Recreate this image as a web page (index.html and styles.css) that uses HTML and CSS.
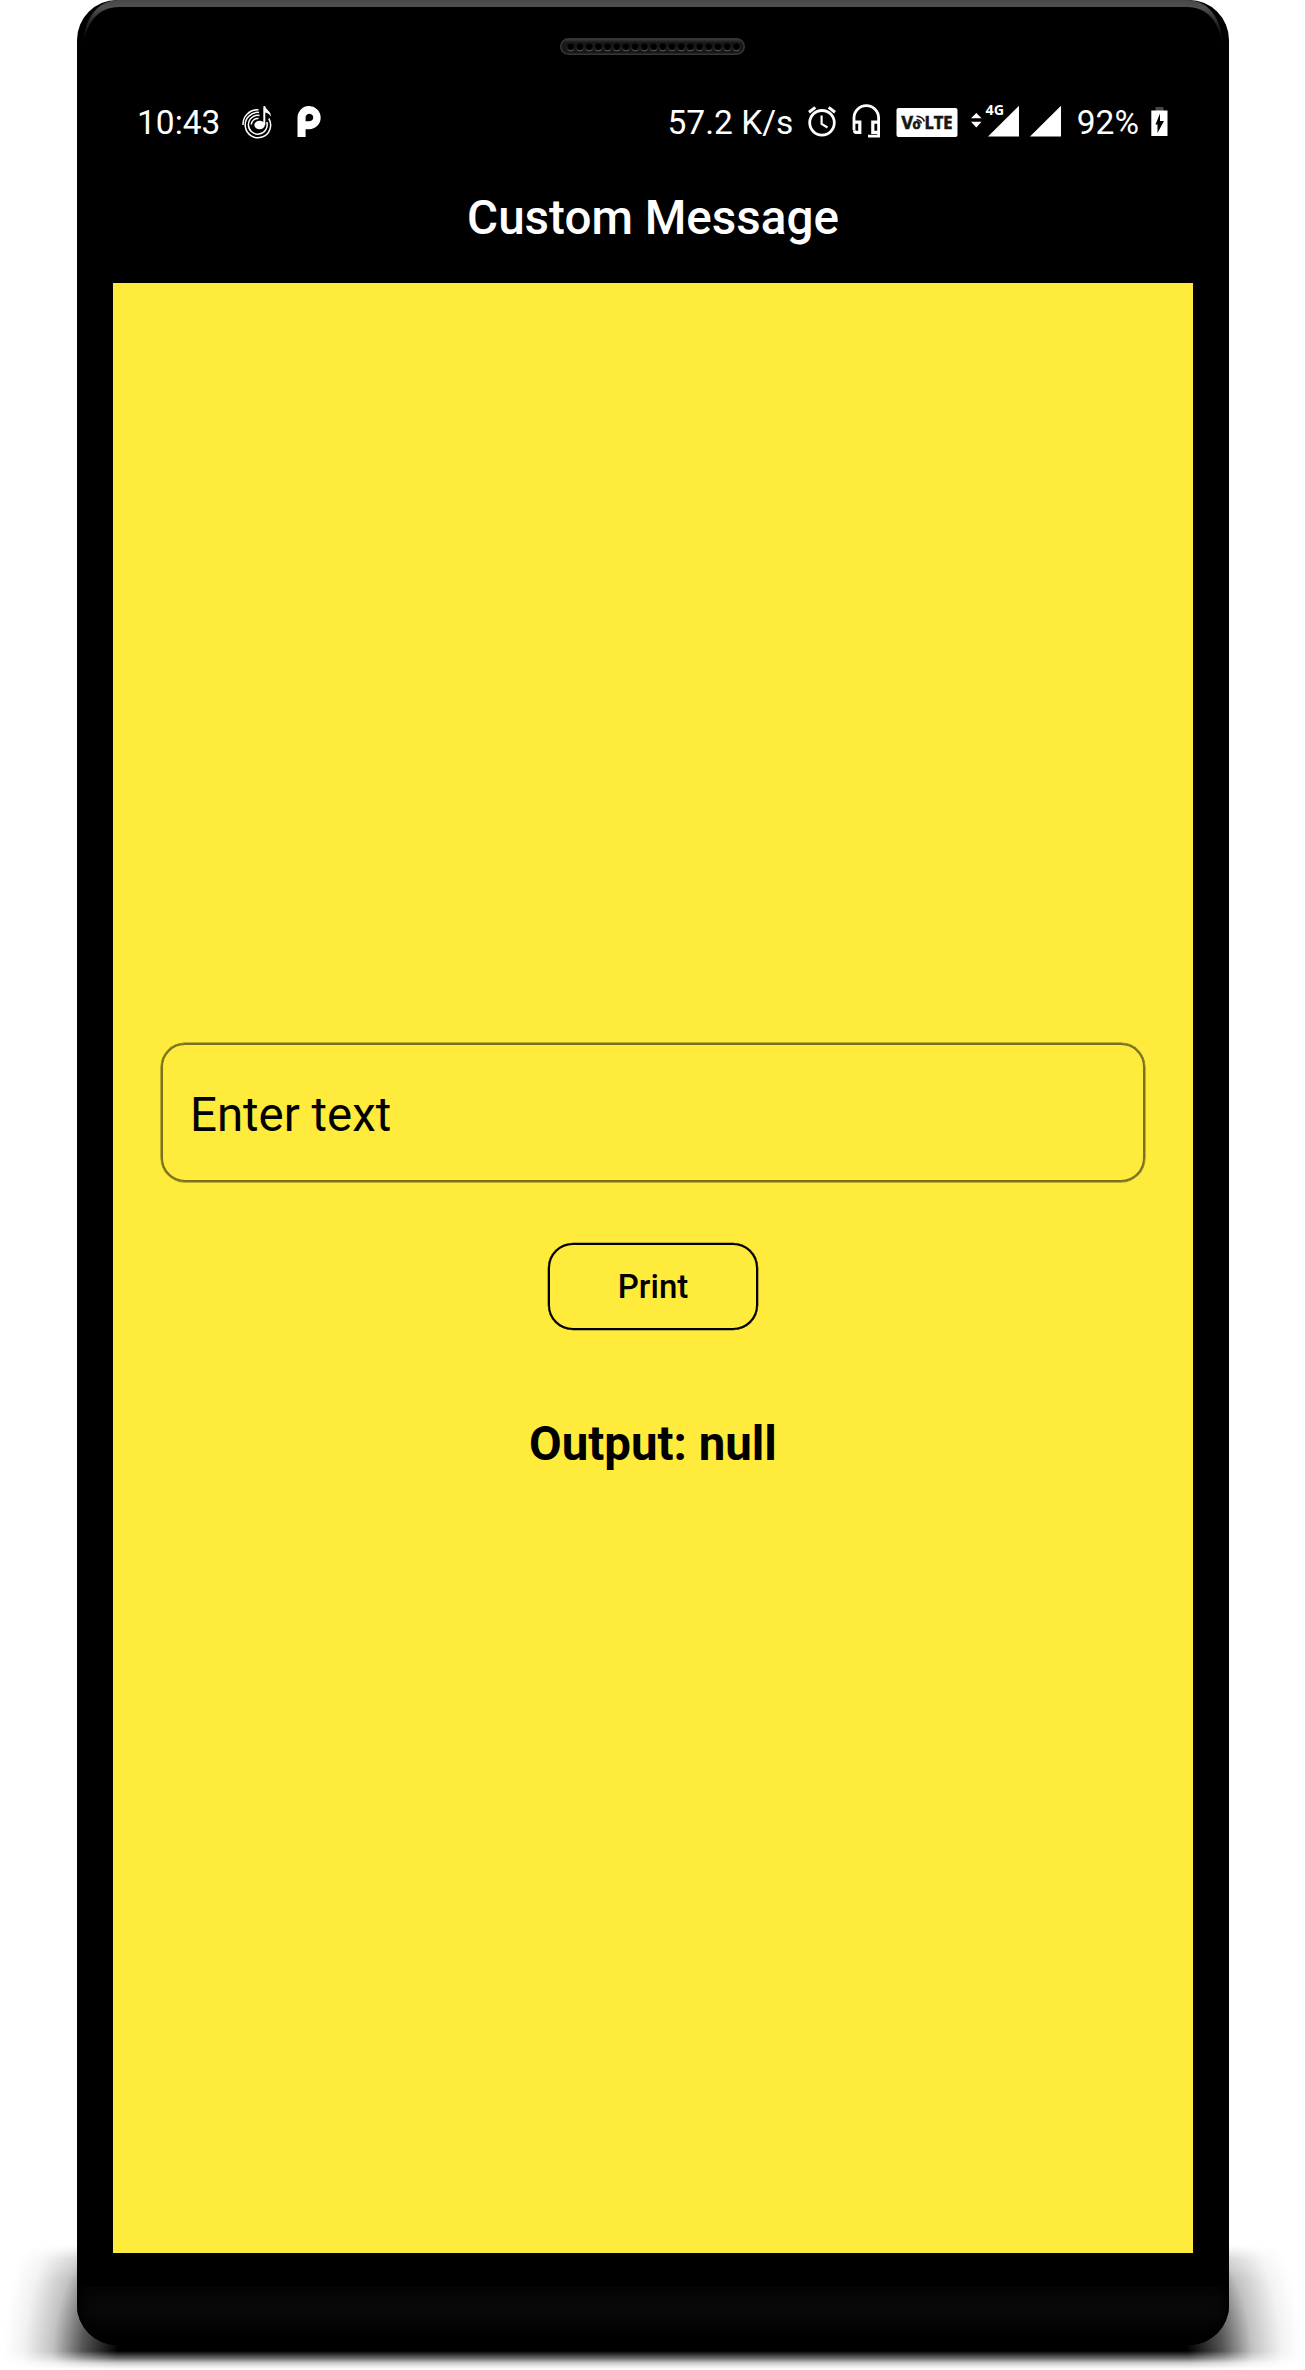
FILE: index.html
```html
<!DOCTYPE html>
<html lang="en">
<head>
<meta charset="utf-8">
<title>Custom Message</title>
<link rel="stylesheet" href="styles.css">
</head>
<body>
<div class="stage">
  <div class="ground-shadow"></div>
  <div class="phone">
    <svg class="rim" width="1152" height="60" viewBox="0 0 1152 60">
      <defs>
        <linearGradient id="rimTone" x1="0" y1="0" x2="0" y2="1">
          <stop offset="0" stop-color="#484848"/><stop offset=".18" stop-color="#505050"/>
          <stop offset=".45" stop-color="#303030"/><stop offset="1" stop-color="#000"/>
        </linearGradient>
      </defs>
      <path d="M7 42C7 20 20 0 42 0H1110C1132 0 1145 20 1145 42C1142 22 1130 7 1110 7H42C22 7 10 22 7 42Z" fill="url(#rimTone)"/>
    </svg>
    <div class="speaker">
      <svg width="185" height="17" viewBox="0 0 185 17">
        <defs>
          <linearGradient id="slot" x1="0" y1="0" x2="0" y2="1">
            <stop offset="0" stop-color="#3d3d3d"/><stop offset=".25" stop-color="#181818"/><stop offset="1" stop-color="#161616"/>
          </linearGradient>
          <linearGradient id="hole" x1="0" y1="0" x2="0" y2="1">
            <stop offset="0" stop-color="#111"/><stop offset=".5" stop-color="#222"/><stop offset="1" stop-color="#555"/>
          </linearGradient>
          <pattern id="holes" x="6" y="4" width="9.2" height="10" patternUnits="userSpaceOnUse">
            <circle cx="4.8" cy="5.3" r="4" fill="url(#hole)"/><circle cx="4.8" cy="4.8" r="3.3" fill="#000"/>
          </pattern>
        </defs>
        <rect x=".8" y=".8" width="183.4" height="15.4" rx="7.7" fill="url(#slot)" stroke="#363636" stroke-width="1.6"/>
        <rect x="6" y="4" width="175" height="10" fill="url(#holes)"/>
      </svg>
    </div>
    <header class="status">
      <div class="status-left">
        <span class="clock">10:43</span>
        <svg class="music" width="30" height="34" viewBox="0 0 30 34" fill="none" stroke="#fff" stroke-width="1.5">
          <path d="M1 22A14.5 14.5 0 0 1 16.5 6.8M26.8 15.5A12.7 12.7 0 1 1 17 9.4M24.8 19A9.4 9.4 0 1 1 17.5 12.5"/>
          <path d="M9.3 21.5A6.3 6.3 0 0 1 16.5 15.6"/>
          <path d="M22.3 22V4.5" stroke-width="2"/>
          <path d="M21.4 3H23C24 7.5 29.5 8 28.7 13.5C27 10.5 25 9.8 22.5 9.6Z" fill="#fff" stroke="none"/>
          <ellipse cx="17.6" cy="22" rx="5.3" ry="4.2" fill="#fff" stroke="none"/>
        </svg>
        <svg class="parking" width="24" height="34" viewBox="0 0 24 34">
          <path fill="#fff" fill-rule="evenodd" d="M.5 34V15.5A11.6 11.6 0 1 1 12 26.3H8.6V34ZM8.6 18.2H11.7A3.8 3.8 0 1 0 8.6 14.5Z"/>
        </svg>
      </div>
      <div class="status-right">
        <span class="rate">57.2 K/s</span>
        <svg class="alarm" width="30" height="34" viewBox="0 0 30 34" fill="none" stroke="#fff">
          <circle cx="15" cy="19.8" r="12.3" stroke-width="2.8"/>
          <path d="M2 9.2L8.3 4.4M21.7 4.4L28 9.2" stroke-width="3"/>
          <path d="M14.6 12.5V20.9L20.5 24.5" stroke-width="2.2"/>
        </svg>
        <svg class="headset" width="29" height="36" viewBox="0 0 29 36" fill="none" stroke="#fff" stroke-width="2.8">
          <path d="M2 27V15A12.3 12.3 0 0 1 26.6 15V33.2H16"/>
          <path d="M2.5 19.2H7.8V29.3H4Q2.5 29.3 2.5 27.3M26.6 19.2H20.8V29.3H26.6" stroke-width="3.2"/>
        </svg>
        <svg class="volte" width="62" height="34" viewBox="0 0 62 34">
          <rect x=".5" y="5" width="61" height="29" rx="2" fill="#fff"/>
          <g font-family="Open Sans, sans-serif" font-weight="700" fill="#161616" stroke="#161616" stroke-width=".7">
            <text x="5.5" y="26" font-size="17" textLength="11.5" lengthAdjust="spacingAndGlyphs">V</text>
            <text x="16.5" y="26" font-size="14" textLength="8" lengthAdjust="spacingAndGlyphs">o</text>
            <text x="28.5" y="26" font-size="17" textLength="28" lengthAdjust="spacingAndGlyphs">LTE</text>
          </g>
          <path d="M20.5 16.8Q24.5 17 25.5 20.5M20.5 13.2Q27 13.5 28.3 18.5" fill="none" stroke="#161616" stroke-width="1.6"/>
        </svg>
        <svg class="signal" width="50" height="34" viewBox="0 0 50 34" fill="#fff">
          <path d="M1 15.2L6.3 10L11.6 15.2ZM1 18.8H11.6L6.3 24.5Z"/>
          <text x="15.6" y="12" font-family="Open Sans, sans-serif" font-weight="700" font-size="13.5" textLength="18.5" lengthAdjust="spacingAndGlyphs">4G</text>
          <path d="M18 33.5L49 2.7V33.5Z"/>
        </svg>
        <svg class="signal-two" width="31" height="34" viewBox="0 0 31 34"><path d="M0 33.5L31 2.7V33.5Z" fill="#fff"/></svg>
        <span class="charge">92%</span>
        <svg class="battery" width="17" height="34" viewBox="0 0 17 34">
          <path d="M4.5 4H12.5V8H4.5Z" fill="#484848"/>
          <path d="M.3 7.5H16.5V33H.3Z" fill="#fff"/>
          <path d="M9 10.5V18H13L6.5 30V21.5H4.5Z" fill="#000"/>
        </svg>
      </div>
    </header>
    <h1 class="title">Custom Message</h1>
    <main class="screen">
      <div class="field">Enter text</div>
      <button class="print">Print</button>
      <p class="output">Output: null</p>
    </main>
    <div class="chin"></div>
  </div>
</div>
</body>
</html>
```
FILE: styles.css
```css
* { box-sizing: border-box; }
body { margin: 0; background: #fff; font-family: Roboto, sans-serif; }
svg { display: block; flex: none; overflow: visible; }

.stage {
  position: relative;
  width: 1305px;
  height: 2370px;
  overflow: hidden;
  padding-left: 77px;
}
.ground-shadow {
  position: absolute;
  left: 0;
  top: 2245px;
  width: 1305px;
  height: 125px;
  background:
    radial-gradient(ellipse 145px 230px at 148px 120px, #000 0, #000 22%, rgba(0,0,0,.66) 46%, rgba(0,0,0,.24) 66%, rgba(0,0,0,.05) 86%, transparent 100%) 0 0 / 148px 125px no-repeat,
    radial-gradient(ellipse 145px 230px at 0 120px, #000 0, #000 22%, rgba(0,0,0,.66) 46%, rgba(0,0,0,.24) 66%, rgba(0,0,0,.05) 86%, transparent 100%) 1157px 0 / 148px 125px no-repeat,
    linear-gradient(#000, #000) 148px 0 / 1009px 125px no-repeat;
  mask-image: linear-gradient(transparent 0, rgba(0,0,0,.7) 14px, #000 35px, #000 106px, rgba(0,0,0,.6) 113px, rgba(0,0,0,.2) 118px, transparent 124px);
}
.phone {
  position: relative;
  width: 1152px;
  height: 2345px;
  border-radius: 40px;
  background: #000;
  overflow: hidden;
  display: flex;
  flex-direction: column;
  align-items: center;
}
.rim { position: absolute; left: 0; top: 0; }
.speaker { margin: 38px 2px 0 0; height: 17px; }

.status {
  width: 1080px;
  height: 34px;
  margin-top: 48px;
  padding: 0 25px 0 24px;
  display: flex;
  justify-content: space-between;
  color: #fff;
  font-size: 33.5px;
  line-height: 39px;
}
.status-left, .status-right { display: flex; }
.status span { white-space: nowrap; }
.music { margin-left: 22px; }
.parking { margin-left: 25px; }
.alarm { margin-left: 14px; }
.headset { margin-left: 15px; }
.volte { margin-left: 15px; }
.signal { margin-left: 12px; }
.signal-two { margin-left: 9.5px; }
.charge { margin-left: 16px; }
.battery { margin-left: 12px; }

.title {
  margin: 53px 0 0;
  height: 93px;
  color: #fff;
  font-size: 47.6px;
  font-weight: 500;
  line-height: 56px;
}
.screen {
  width: 1080px;
  height: 1970px;
  background: #ffeb3b;
  padding-top: 760px;
  display: flex;
  flex-direction: column;
  align-items: center;
  color: #000;
}
.field {
  width: 984px;
  height: 139px;
  border: 2px solid #7a711e;
  border-radius: 24px;
  box-shadow: 0 0 0 .5px #7a711e;
  padding: 1px 27px 0;
  font-size: 47.4px;
  line-height: 139px;
}
.print {
  width: 210px;
  height: 87px;
  margin-top: 61px;
  padding: 0;
  border: 2px solid #000;
  border-radius: 25px;
  box-shadow: 0 0 0 .3px #000;
  background: none;
  color: #000;
  font: 500 33px/83px Roboto, sans-serif;
}
.output {
  margin: 86px 0 0;
  font-size: 47.4px;
  font-weight: 700;
  line-height: 56px;
}
.chin {
  width: 1152px;
  height: 58px;
  margin-top: 34px;
  background: linear-gradient(#060606, #080808 45%, #000 85%);
  box-shadow: inset 10px 0 12px -6px #000, inset -10px 0 12px -6px #000;
}
```
